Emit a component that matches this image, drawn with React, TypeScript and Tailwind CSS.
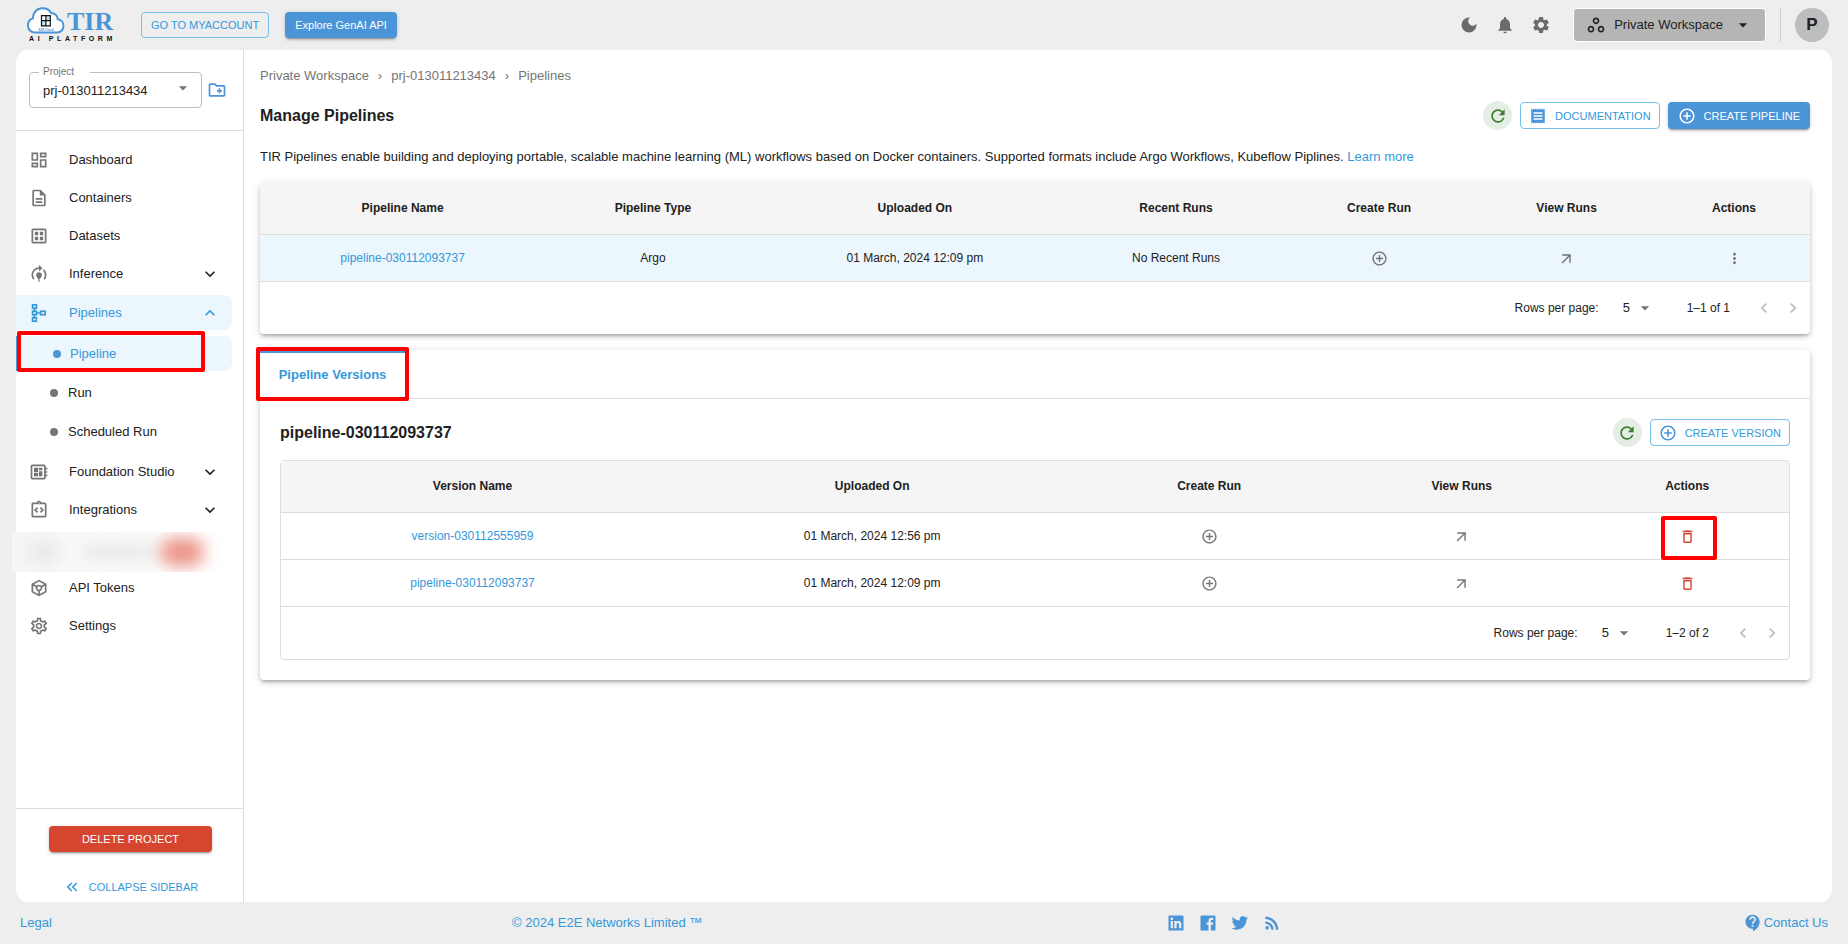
import type { ReactNode } from 'react';
import type { IconType } from 'react-icons';
import {
  MdArrowDropDown,
  MdArrowOutward,
  MdContactSupport,
  MdControlPoint,
  MdDarkMode,
  MdDeleteOutline,
  MdKeyboardArrowDown,
  MdKeyboardArrowLeft,
  MdKeyboardArrowRight,
  MdKeyboardArrowUp,
  MdKeyboardDoubleArrowLeft,
  MdMoreVert,
  MdNotifications,
  MdOutlineCreateNewFolder,
  MdOutlineDashboard,
  MdOutlineDataset,
  MdOutlineDescription,
  MdOutlineDeveloperBoard,
  MdOutlineIntegrationInstructions,
  MdOutlineSettings,
  MdOutlineToken,
  MdModelTraining,
  MdOutlineWorkspaces,
  MdReceipt,
  MdRefresh,
  MdRssFeed,
  MdSettings,
} from 'react-icons/md';
import { BiLogoFacebookSquare, BiLogoLinkedinSquare, BiLogoTwitter } from 'react-icons/bi';

type NavItem = {
  label: string;
  icon: IconType;
  expandable?: boolean;
};

const topNav: NavItem[] = [
  { label: 'Dashboard', icon: MdOutlineDashboard },
  { label: 'Containers', icon: MdOutlineDescription },
  { label: 'Datasets', icon: MdOutlineDataset },
  { label: 'Inference', icon: MdModelTraining, expandable: true },
];

const middleNav: NavItem[] = [
  { label: 'Foundation Studio', icon: MdOutlineDeveloperBoard, expandable: true },
  { label: 'Integrations', icon: MdOutlineIntegrationInstructions, expandable: true },
];

const bottomNav: NavItem[] = [
  { label: 'API Tokens', icon: MdOutlineToken },
  { label: 'Settings', icon: MdOutlineSettings },
];

const versions = [
  { name: 'version-030112555959', uploaded: '01 March, 2024 12:56 pm', marked: true },
  { name: 'pipeline-030112093737', uploaded: '01 March, 2024 12:09 pm', marked: false },
];

const cardShadow =
  'shadow-[0_3px_3px_-2px_rgba(0,0,0,0.2),0_3px_4px_0_rgba(0,0,0,0.14),0_1px_8px_0_rgba(0,0,0,0.12)]';
const buttonShadow =
  'shadow-[0_3px_1px_-2px_rgba(0,0,0,0.2),0_2px_2px_0_rgba(0,0,0,0.14),0_1px_5px_0_rgba(0,0,0,0.12)]';

function Logo() {
  return (
    <a href="#home" aria-label="TIR AI Platform" className="ml-[27px] block">
      <svg width="90" height="36" viewBox="0 0 90 36">
        <path
          d="M8 25.500h22c4 0 6.500-3 6.500-6.500 0-3.600-2.500-6.300-5.800-6.800C30.400 8.500 27.500 6.200 24.200 6 22 2.200 18.200 1 14.500 1.300 9.500 1.800 5.800 6 5.900 11.400 2.800 12.300 1 15.200 1 18.500c0 4 3 7 7 7z"
          fill="#fff"
          stroke="#4a94d8"
          strokeWidth="2"
        />
        <path d="M18.900 8.600h4.400v5.100h-4.400zM14.500 13.700h4.400v5.100h-4.400z" fill="#bfe3f5" />
        <path
          d="M14.500 8.600h8.800v10.200h-8.800zM14.500 13.700h8.800M18.900 8.600v10.200"
          fill="none"
          stroke="#111"
          strokeWidth="1.200"
        />
        <text x="11.500" y="23.500" fontFamily="Liberation Sans" fontSize="3" fontWeight="700" fill="#4a94d8">
          E2E Cloud
        </text>
        <text x="40" y="23" fontFamily="Liberation Serif" fontSize="26" fontWeight="700" fill="#4a94d8">
          TIR
        </text>
        <text x="2" y="34" fontFamily="Liberation Sans" fontSize="7" fontWeight="700" letterSpacing="3.600" fill="#111">
          AI PLATFORM
        </text>
      </svg>
    </a>
  );
}

function PipelinesIcon() {
  return (
    <svg width="20" height="20" viewBox="0 0 20 20" fill="none" stroke="currentColor" strokeWidth="1.700">
      <rect x="3.600" y="1.800" width="3.800" height="3.400" />
      <rect x="3.600" y="8.300" width="3.800" height="3.400" />
      <rect x="3.600" y="14.800" width="3.800" height="3.400" />
      <rect x="11.600" y="8.300" width="4.600" height="3.400" />
      <path d="M5.500 5.200v3.100M5.500 11.700v3.100M7.400 10h4.200" />
    </svg>
  );
}

// Red frame that calls out the element it sits on
function Highlight({ className }: { className: string }) {
  return <span className={`pointer-events-none absolute z-10 rounded-xs border-4 border-[#ff0000] ${className}`} />;
}

function NavLink({ item }: { item: NavItem }) {
  const Icon = item.icon;
  return (
    <a href="#nav" className="mb-[3px] mr-[11px] flex h-[35px] items-center rounded-r-lg pl-[13px] pr-3">
      <Icon className="h-5 w-5 text-[#757575]" />
      <span className="ml-5 flex-1">{item.label}</span>
      {item.expandable && <MdKeyboardArrowDown className="h-5 w-5" />}
    </a>
  );
}

function Sidebar() {
  return (
    <aside className="flex w-[228px] shrink-0 flex-col border-r border-[#dedede]">
      <div className="flex h-[81px] items-start gap-[5px] border-b border-[#dedede] pl-[13px] pt-4">
        <fieldset className="h-[42px] w-[173px] rounded-sm border border-[#bdbdbd] px-0">
          <legend className="ml-[9px] pl-1 pr-4 text-[10px] leading-3 text-[#757575]">
            <label htmlFor="project">Project</label>
          </legend>
          <div className="relative">
            <select id="project" className="h-[26px] w-full appearance-none bg-transparent pl-[13px] outline-none">
              <option>prj-013011213434</option>
            </select>
            <MdArrowDropDown className="pointer-events-none absolute right-2 top-0 h-5 w-5 text-[#757575]" />
          </div>
        </fieldset>
        <button aria-label="New project" className="mt-[14px] text-[#4a94d8]">
          <MdOutlineCreateNewFolder className="h-5 w-5" />
        </button>
      </div>

      <nav className="flex-1 pt-[11px]">
        {topNav.map((item) => (
          <NavLink key={item.label} item={item} />
        ))}

        <a
          href="#pipelines"
          className="mb-[3px] mr-[11px] mt-1 flex h-[35px] items-center rounded-r-lg bg-[#ebf6fd] pl-[13px] pr-3 text-[#3498db]"
        >
          <PipelinesIcon />
          <span className="ml-5 flex-1">Pipelines</span>
          <MdKeyboardArrowUp className="h-5 w-5" />
        </a>
        <div className="flex flex-col gap-1 pb-[5px] pt-[3px]">
          <div className="relative">
            <a
              href="#pipeline"
              className="mr-[11px] flex h-[35px] items-center gap-[9px] rounded-r-lg border-l-3 border-[#4a94d8] bg-[#ebf6fd] pl-[34px] text-[#3498db]"
            >
              <span className="h-2 w-2 rounded-full bg-[#4a94d8]" />
              Pipeline
            </a>
            <Highlight className="-top-[5px] left-px h-[41px] w-[188px]" />
          </div>
          {['Run', 'Scheduled Run'].map((label) => (
            <a key={label} href="#run" className="mr-[11px] flex h-[35px] items-center gap-[10px] pl-[34px]">
              <span className="h-2 w-2 rounded-full bg-[#757575]" />
              {label}
            </a>
          ))}
        </div>
        {middleNav.map((item) => (
          <NavLink key={item.label} item={item} />
        ))}

        {/* Hidden entry, smeared out */}
        <div className="-mb-[2px] -ml-1 mr-4 mt-[5px] flex h-10 items-center overflow-hidden bg-linear-to-r from-[#f6f6f6] to-white">
          <span className="ml-4 h-5 w-8 rounded-full bg-[#e6e6e6] blur-[8px]" />
          <span className="ml-6 h-4 w-18 bg-[#e8e8e8] blur-[8px]" />
          <span className="ml-1 h-7 w-11 rounded-full bg-[#ec9489] blur-[8px]" />
        </div>

        {bottomNav.map((item) => (
          <NavLink key={item.label} item={item} />
        ))}
      </nav>

      <div className="flex flex-col items-center border-t border-[#dedede] pl-[2px] pt-[17px] text-[11px]">
        <button className={`h-[26px] w-[163px] rounded-sm bg-[#d6452f] text-white ${buttonShadow}`}>
          DELETE PROJECT
        </button>
        <button className="mb-[2px] mt-[22px] flex h-[26px] items-center gap-2 text-[#3498db]">
          <MdKeyboardDoubleArrowLeft className="h-[18px] w-[18px]" />
          COLLAPSE SIDEBAR
        </button>
      </div>
    </aside>
  );
}

function RefreshButton() {
  return (
    <button aria-label="Refresh" className="flex h-[29px] w-[29px] items-center justify-center rounded-full bg-[#e5eee5] text-[#3d7d32]">
      <MdRefresh className="h-5 w-5" />
    </button>
  );
}

function OutlinedButton({ icon: Icon, children }: { icon: IconType; children: ReactNode }) {
  return (
    <button className="flex h-[27px] items-center gap-2 rounded-sm border border-[#74c0ea] px-2 text-[11px] text-[#3498db]">
      <Icon className="h-[18px] w-[18px] text-[#4a94d8]" />
      {children}
    </button>
  );
}

function HeadCell({ children, className = '' }: { children: ReactNode; className?: string }) {
  return <th className={`border-b border-[#dedede] bg-[#f5f5f5] pb-[2px] font-bold ${className}`}>{children}</th>;
}

function Cell({ children }: { children: ReactNode }) {
  return <td className="border-b border-[#dedede] text-center">{children}</td>;
}

function IconButton({ label, icon: Icon, className = 'text-[#757575]' }: { label: string; icon: IconType; className?: string }) {
  return (
    <button aria-label={label} className={`block ${className}`}>
      <Icon className="h-[17px] w-[17px]" />
    </button>
  );
}

function IconCell({ children }: { children: ReactNode }) {
  return (
    <Cell>
      <div className="flex justify-center">{children}</div>
    </Cell>
  );
}

function Pagination({ id, range }: { id: string; range: string }) {
  return (
    <div className="flex h-[52px] items-center justify-end pr-[7px] text-[12px]">
      <label htmlFor={id}>Rows per page:</label>
      <div className="relative ml-[18px] mr-8">
        <select id={id} defaultValue="5" className="block h-6 w-[38px] appearance-none bg-transparent pl-[6px] text-[13px] outline-none">
          <option>5</option>
          <option>10</option>
          <option>25</option>
        </select>
        <MdArrowDropDown className="pointer-events-none absolute right-0 top-[2px] h-5 w-5 text-[#757575]" />
      </div>
      <span>{range}</span>
      <button aria-label="Previous page" className="ml-6 text-[#bdbdbd]">
        <MdKeyboardArrowLeft className="h-5 w-5" />
      </button>
      <button aria-label="Next page" className="ml-[9px] text-[#bdbdbd]">
        <MdKeyboardArrowRight className="h-5 w-5" />
      </button>
    </div>
  );
}

function Header() {
  return (
    <header className="flex h-[50px] items-center pb-px">
      <Logo />
      <button className="ml-6 h-[26px] rounded-sm border border-[#74c0ea] px-[9px] text-[11px] text-[#3498db]">
        GO TO MYACCOUNT
      </button>
      <button className={`ml-4 h-[26px] rounded-sm bg-[#4a94d8] px-[10px] text-[11px] text-white ${buttonShadow}`}>
        Explore GenAI API
      </button>
      <div className="ml-auto flex items-center gap-4 text-[#6b6b6b]">
        <button aria-label="Dark mode"><MdDarkMode className="h-5 w-5" /></button>
        <button aria-label="Notifications"><MdNotifications className="h-5 w-5" /></button>
        <button aria-label="Settings"><MdSettings className="h-5 w-5" /></button>
      </div>
      <button className="ml-[22px] flex h-[34px] items-center rounded-sm border border-white bg-[#b5b5b5] pl-3 pr-3">
        <MdOutlineWorkspaces className="h-5 w-5" />
        <span className="ml-2 mr-[10px]">Private Workspace</span>
        <MdArrowDropDown className="h-5 w-5" />
      </button>
      <span className="ml-[14px] h-[35px] w-px bg-[#cfcfcf]" />
      <span className="ml-[14px] mr-[19px] flex h-[34px] w-[34px] items-center justify-center rounded-full bg-[#bdbdbd] text-[17px] font-bold">
        P
      </span>
    </header>
  );
}

function PipelinesTable() {
  return (
    <section className={`rounded-sm bg-white ${cardShadow}`}>
      <table className="w-full table-fixed border-separate border-spacing-0 text-[12px]">
        <thead>
          <tr className="h-[52px]">
            <HeadCell className="w-[18.4%] rounded-tl-sm">Pipeline Name</HeadCell>
            <HeadCell className="w-[13.9%]">Pipeline Type</HeadCell>
            <HeadCell className="w-[19.9%]">Uploaded On</HeadCell>
            <HeadCell className="w-[13.8%]">Recent Runs</HeadCell>
            <HeadCell className="w-[12.4%]">Create Run</HeadCell>
            <HeadCell className="w-[11.8%]">View Runs</HeadCell>
            <HeadCell className="rounded-tr-sm">Actions</HeadCell>
          </tr>
        </thead>
        <tbody>
          <tr className="h-[47px] bg-[#ebf6fd]">
            <Cell><a href="#p" className="text-[#3498db]">pipeline-030112093737</a></Cell>
            <Cell>Argo</Cell>
            <Cell>01 March, 2024 12:09 pm</Cell>
            <Cell>No Recent Runs</Cell>
            <IconCell><IconButton label="Create run" icon={MdControlPoint} /></IconCell>
            <IconCell><IconButton label="View runs" icon={MdArrowOutward} /></IconCell>
            <IconCell><IconButton label="More actions" icon={MdMoreVert} /></IconCell>
          </tr>
        </tbody>
      </table>
      <Pagination id="pipeline-rows" range="1–1 of 1" />
    </section>
  );
}

function VersionsCard() {
  return (
    <section className={`mt-4 rounded-sm bg-white ${cardShadow}`}>
      <div className="relative flex h-[49px] border-b border-[#dedede]">
        <button className="w-[145px] border-t-3 border-[#4a94d8] pb-[2px] font-bold text-[#3498db]">
          Pipeline Versions
        </button>
        <Highlight className="-left-1 -top-[3px] h-[54px] w-[153px]" />
      </div>
      <div className="px-5 pb-5 pt-[19px]">
        <div className="flex items-center gap-2">
          <h2 className="mr-auto text-base font-bold">pipeline-030112093737</h2>
          <RefreshButton />
          <OutlinedButton icon={MdControlPoint}>CREATE VERSION</OutlinedButton>
        </div>
        <div className="mt-[13px] rounded-sm border border-[#dedede]">
          <table className="w-full table-fixed border-separate border-spacing-0 text-[12px]">
            <thead>
              <tr className="h-[52px]">
                <HeadCell className="w-[25.4%]">Version Name</HeadCell>
                <HeadCell className="w-[27.6%]">Uploaded On</HeadCell>
                <HeadCell className="w-[17.1%]">Create Run</HeadCell>
                <HeadCell className="w-[16.4%]">View Runs</HeadCell>
                <HeadCell>Actions</HeadCell>
              </tr>
            </thead>
            <tbody>
              {versions.map((version) => (
                <tr key={version.name} className="h-[47px]">
                  <Cell><a href="#v" className="text-[#3498db]">{version.name}</a></Cell>
                  <Cell>{version.uploaded}</Cell>
                  <IconCell><IconButton label="Create run" icon={MdControlPoint} /></IconCell>
                  <IconCell><IconButton label="View runs" icon={MdArrowOutward} /></IconCell>
                  <IconCell>
                    <div className="relative">
                      <IconButton label="Delete version" icon={MdDeleteOutline} className="text-[#d6452f]" />
                      {version.marked && <Highlight className="-left-[18px] -top-3 h-11 w-14" />}
                    </div>
                  </IconCell>
                </tr>
              ))}
            </tbody>
          </table>
          <Pagination id="version-rows" range="1–2 of 2" />
        </div>
      </div>
    </section>
  );
}

function Footer() {
  return (
    <footer className="flex h-[42px] items-center justify-between px-5 text-[#3498db]">
      <a href="#legal">Legal</a>
      <span>© 2024 E2E Networks Limited ™</span>
      <div className="flex items-center gap-3 pl-1 text-[#4a94d8]">
        <a href="#linkedin" aria-label="LinkedIn"><BiLogoLinkedinSquare className="h-5 w-5" /></a>
        <a href="#facebook" aria-label="Facebook"><BiLogoFacebookSquare className="h-5 w-5" /></a>
        <a href="#twitter" aria-label="Twitter"><BiLogoTwitter className="h-5 w-5" /></a>
        <a href="#rss" aria-label="RSS"><MdRssFeed className="h-5 w-5" /></a>
      </div>
      <a href="#contact" className="flex items-center gap-px">
        <MdContactSupport className="h-5 w-5 text-[#4a94d8]" />
        Contact Us
      </a>
    </footer>
  );
}

export default function App() {
  return (
    <div className="flex min-h-screen flex-col bg-[#eeeeee] font-['Liberation_Sans',sans-serif] text-[13px] leading-5 text-[#212121]">
      <Header />
      <div className="mx-4 flex flex-1 rounded-xl bg-white">
        <Sidebar />
        <main className="min-w-0 flex-1 pl-4 pr-[22px] pt-4">
          <nav aria-label="Breadcrumb" className="flex gap-[9px] text-[#757575]">
            <a href="#workspace">Private Workspace</a>
            <span>›</span>
            <a href="#project">prj-013011213434</a>
            <span>›</span>
            <span>Pipelines</span>
          </nav>
          <div className="mt-[15px] flex items-center gap-2">
            <h1 className="mr-auto text-base font-bold">Manage Pipelines</h1>
            <RefreshButton />
            <OutlinedButton icon={MdReceipt}>DOCUMENTATION</OutlinedButton>
            <button className={`flex h-[27px] items-center gap-2 rounded-sm bg-[#4a94d8] px-[10px] text-[11px] text-white ${buttonShadow}`}>
              <MdControlPoint className="h-[18px] w-[18px]" />
              CREATE PIPELINE
            </button>
          </div>
          <p className="mb-4 mt-[17px]">
            TIR Pipelines enable building and deploying portable, scalable machine learning (ML) workflows based on
            Docker containers. Supported formats include Argo Workflows, Kubeflow Piplines.{' '}
            <a href="#learn" className="text-[#3498db]">Learn more</a>
          </p>
          <PipelinesTable />
          <VersionsCard />
        </main>
      </div>
      <Footer />
    </div>
  );
}
